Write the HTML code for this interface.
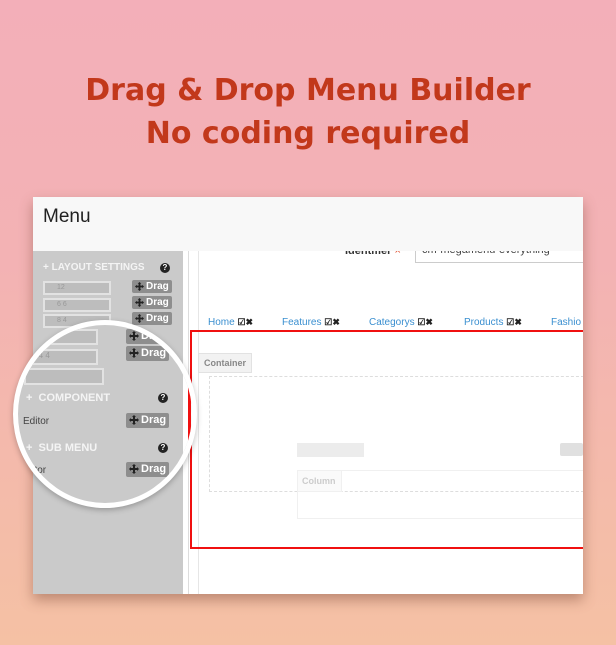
<!DOCTYPE html>
<html><head><meta charset="utf-8"><style>
*{margin:0;padding:0;box-sizing:border-box}
body{width:616px;height:645px;overflow:hidden;position:relative;font-family:"Liberation Sans",Arial,sans-serif;background:linear-gradient(180deg,#f3afb9 0%,#f3b2b4 40%,#f4bca9 80%,#f5c1a4 100%)}
.t{position:absolute;left:0;width:616px;text-align:center;color:#c2381b;font-family:"DejaVu Sans",sans-serif;font-weight:bold;font-size:30px;letter-spacing:0}
.win{position:absolute;left:33px;top:197px;width:550px;height:397px;background:#fff;box-shadow:0 6px 12px rgba(120,70,50,.45);overflow:hidden}
.hd{position:absolute;left:0;top:0;width:550px;height:54px;background:#f8f8f8;font-size:19px;color:#222;padding:9px 0 0 10px;z-index:2}
.side{position:absolute;left:0;top:54px;width:150px;height:343px;background:#cacaca}
.inp{position:absolute;height:14px;border:2px solid #e2e2e2;background:#bdbdbd;font-size:7px;color:#999;padding:1px 12px}
.drag{position:absolute;height:13px;background:#8e8e8e;border-radius:2px;color:#fff;font-size:10px;font-weight:bold;padding:0 3px;line-height:13px}
.drag svg{vertical-align:-2px;margin-right:2px}
.lab{position:absolute;color:#f4f4f4;font-weight:bold;font-size:11px}
.q{position:absolute;width:10px;height:10px;border-radius:50%;background:#222;color:#fff;font-size:8px;line-height:10px;text-align:center;font-weight:bold}
.ed{position:absolute;font-size:10px;color:#444}
.nav{position:absolute;top:120px;font-size:10px;color:#3a8fd0}
.nav b{color:#222;font-size:9px}
</style></head><body>
<div class="t" style="top:73px">Drag &amp; Drop Menu Builder</div>
<div class="t" style="top:116px">No coding required</div>
<div class="win">
 <div class="hd">Menu</div>
 <div class="side">
  <div class="lab" style="left:10px;top:11px;font-size:10px">+ LAYOUT SETTINGS</div>
  <div class="q" style="left:127px;top:12px">?</div>
  <div class="inp" style="left:10px;top:30px;width:68px">12</div>
  <div class="inp" style="left:10px;top:47px;width:68px">6 6</div>
  <div class="inp" style="left:10px;top:63px;width:68px">8 4</div>
  <div class="drag" style="left:99px;top:29px"><svg width="9" height="9" viewBox="0 0 10 10"><path d="M5 0L7 2H6V4H8V3L10 5L8 7V6H6V8H7L5 10L3 8H4V6H2V7L0 5L2 3V4H4V2H3Z" fill="#222"/></svg>Drag</div>
  <div class="drag" style="left:99px;top:45px"><svg width="9" height="9" viewBox="0 0 10 10"><path d="M5 0L7 2H6V4H8V3L10 5L8 7V6H6V8H7L5 10L3 8H4V6H2V7L0 5L2 3V4H4V2H3Z" fill="#222"/></svg>Drag</div>
  <div class="drag" style="left:99px;top:61px"><svg width="9" height="9" viewBox="0 0 10 10"><path d="M5 0L7 2H6V4H8V3L10 5L8 7V6H6V8H7L5 10L3 8H4V6H2V7L0 5L2 3V4H4V2H3Z" fill="#222"/></svg>Drag</div>
 </div>
 <div style="position:absolute;left:155px;top:54px;width:1px;height:343px;background:#ddd"></div>
 <div style="position:absolute;left:165px;top:54px;width:1px;height:343px;background:#e6e6e6"></div>
 <div style="position:absolute;left:312px;top:48px;font-size:11px;color:#333;font-weight:bold">Identifier <span style="color:#e05030;font-weight:normal">×</span></div>
 <div style="position:absolute;left:382px;top:42px;width:175px;height:24px;border:1px solid #ccc;background:#fff;font-size:11px;color:#444;padding:4px 6px">cm-megamenu-everything</div>
 <div class="nav" style="left:175px">Home <b>☑✖</b></div>
 <div class="nav" style="left:249px">Features <b>☑✖</b></div>
 <div class="nav" style="left:336px">Categorys <b>☑✖</b></div>
 <div class="nav" style="left:431px">Products <b>☑✖</b></div>
 <div class="nav" style="left:518px">Fashio</div>
 <div style="position:absolute;left:157px;top:133px;width:400px;height:219px;border:2px solid #f01010;border-right:none"></div>
 <div style="position:absolute;left:165px;top:156px;width:54px;height:20px;background:#f2f2f2;border:1px solid #e2e2e2;font-size:9px;color:#888;font-weight:bold;padding:4px 5px">Container</div>
 <div style="position:absolute;left:176px;top:179px;width:380px;height:116px;border:1px dashed #ddd;border-right:none"></div>
 <div style="position:absolute;left:264px;top:246px;width:67px;height:14px;background:#ececec"></div>
 <div style="position:absolute;left:527px;top:246px;width:23px;height:13px;background:#e0e0e0;border-radius:2px"></div>
 <div style="position:absolute;left:264px;top:273px;width:296px;height:49px;border:1px solid #f0f0f0"></div>
 <div style="position:absolute;left:264px;top:273px;width:45px;height:22px;border:1px solid #f0f0f0;background:#fafafa;font-size:9px;color:#ccc;font-weight:bold;padding:5px 4px">Column</div>
</div>
<div style="position:absolute;left:13px;top:320px;width:184px;height:188px;border-radius:50%;border:5px solid #fff;overflow:hidden;background:#cacaca;box-shadow:0 2px 6px rgba(0,0,0,.25)">
 <div style="position:absolute;left:165px;top:0;width:20px;height:200px;background:#fff"></div>
 <div style="position:absolute;left:170px;top:5px;width:3px;height:200px;background:#f01010"></div>
 <div class="inp" style="left:0;top:4px;width:80px;height:16px"></div>
 <div class="inp" style="left:0;top:24px;width:80px;height:16px;padding:0 12px;font-size:8px">4 4 4</div>
 <div class="inp" style="left:6px;top:43px;width:80px;height:17px"></div>
 <div class="drag" style="left:108px;top:4px;height:15px;font-size:11px;line-height:15px"><svg width="10" height="10" viewBox="0 0 10 10"><path d="M5 0L7 2H6V4H8V3L10 5L8 7V6H6V8H7L5 10L3 8H4V6H2V7L0 5L2 3V4H4V2H3Z" fill="#222"/></svg>Drag</div>
 <div class="drag" style="left:108px;top:21px;height:15px;font-size:11px;line-height:15px"><svg width="10" height="10" viewBox="0 0 10 10"><path d="M5 0L7 2H6V4H8V3L10 5L8 7V6H6V8H7L5 10L3 8H4V6H2V7L0 5L2 3V4H4V2H3Z" fill="#222"/></svg>Drag</div>
 <div class="lab" style="left:8px;top:67px;font-size:11px">+&nbsp;&nbsp;COMPONENT</div>
 <div class="q" style="left:140px;top:68px">?</div>
 <div class="ed" style="left:5px;top:91px">Editor</div>
 <div class="drag" style="left:108px;top:88px;height:15px;font-size:11px;line-height:15px"><svg width="10" height="10" viewBox="0 0 10 10"><path d="M5 0L7 2H6V4H8V3L10 5L8 7V6H6V8H7L5 10L3 8H4V6H2V7L0 5L2 3V4H4V2H3Z" fill="#222"/></svg>Drag</div>
 <div class="lab" style="left:8px;top:117px;font-size:11px">+&nbsp;&nbsp;SUB MENU</div>
 <div class="q" style="left:140px;top:118px">?</div>
 <div class="ed" style="left:2px;top:140px">Editor</div>
 <div class="drag" style="left:108px;top:137px;height:15px;font-size:11px;line-height:15px"><svg width="10" height="10" viewBox="0 0 10 10"><path d="M5 0L7 2H6V4H8V3L10 5L8 7V6H6V8H7L5 10L3 8H4V6H2V7L0 5L2 3V4H4V2H3Z" fill="#222"/></svg>Drag</div>
</div>
</body></html>
